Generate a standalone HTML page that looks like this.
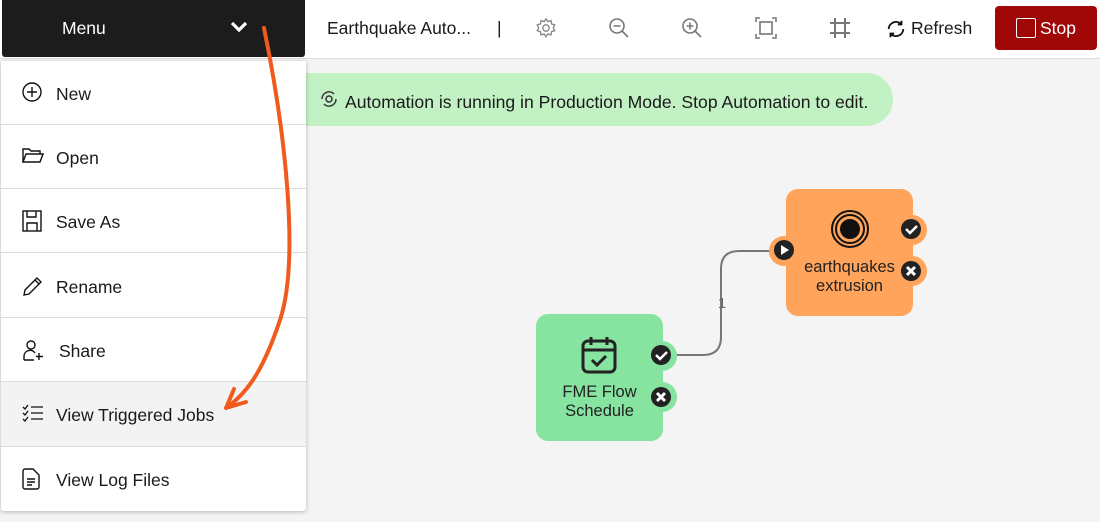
<!DOCTYPE html>
<html><head><meta charset="utf-8"><style>
*{margin:0;padding:0;box-sizing:border-box}
body{width:1100px;height:522px;overflow:hidden;background:#f4f4f4;font-family:"Liberation Sans",sans-serif;color:#1a1a1a;position:relative}
.hdr{position:absolute;left:0;top:0;width:1100px;height:59px;background:#fff;border-bottom:1px solid #ddd}
.menu{position:absolute;left:2px;top:0;width:303px;height:57px;background:#1c1c1c;border-radius:0 0 3px 3px;color:#fff;font-size:17.5px}
.menu span{position:absolute;left:60px;top:18px}
.t{position:absolute;font-size:17.5px;top:18px}
.stop{position:absolute;left:995px;top:6px;width:102px;height:44px;background:#a00808;border-radius:4px;color:#fff;font-size:17.5px}
.drop{position:absolute;left:1px;top:61px;width:305px;height:450px;background:#fff;box-shadow:0 1px 4px rgba(0,0,0,.25);border-radius:0 0 3px 3px}
.row{position:absolute;left:0;width:305px;height:64px;border-bottom:1px solid #ddd;font-size:17.5px}
.row span{position:absolute;left:55px;top:23px}
.row svg{position:absolute;left:21px;top:21px}
.banner{position:absolute;left:300px;top:73px;width:593px;height:53px;background:#c2f2c4;border-radius:0 27px 27px 0;font-size:17.6px}
.node{position:absolute;width:127px;height:127px;border-radius:12px;text-align:center;font-size:16.5px;line-height:19px;color:#222}
.port{position:absolute;width:30px;height:30px;border-radius:50%}
</style></head><body>
<div class="hdr"></div>
<div class="menu"><span>Menu</span>
<svg style="position:absolute;left:227px;top:20px" width="20" height="14" viewBox="0 0 20 14"><path d="M3 3l7 7 7-7" stroke="#fff" stroke-width="3.2" fill="none"/></svg></div>
<div class="t" style="left:327px">Earthquake Auto...</div>
<div class="t" style="left:497px">|</div>
<svg style="position:absolute;left:535px;top:17px" width="22" height="22" viewBox="0 0 24 24" fill="none" stroke="#888" stroke-width="1.5"><circle cx="12" cy="12" r="3.5"/><path d="M12 2l2 3 3.5-1 .5 3.5 3.5 1-1.5 3.5 1.5 3-3.5 1-.5 3.5-3.5-1-2 3-2-3-3.5 1-.5-3.5-3.5-1 1.5-3-1.5-3.5 3.5-1 .5-3.5 3.5 1z"/></svg>
<svg style="position:absolute;left:608px;top:17px" width="22" height="22" viewBox="0 0 22 22" fill="none" stroke="#777" stroke-width="1.6"><circle cx="9" cy="9" r="7"/><path d="M5.5 9h7M14 14l6 6"/></svg>
<svg style="position:absolute;left:681px;top:17px" width="22" height="22" viewBox="0 0 22 22" fill="none" stroke="#777" stroke-width="1.6"><circle cx="9" cy="9" r="7"/><path d="M5.5 9h7M9 5.5v7M14 14l6 6"/></svg>
<svg style="position:absolute;left:755px;top:17px" width="22" height="22" viewBox="0 0 22 22" fill="none" stroke="#777" stroke-width="1.6"><path d="M1 5V1h4M17 1h4v4M21 17v4h-4M5 21H1v-4"/><rect x="5" y="5" width="12" height="12"/></svg>
<svg style="position:absolute;left:829px;top:17px" width="22" height="22" viewBox="0 0 22 22" fill="none" stroke="#777" stroke-width="2"><path d="M6 1v20M16 1v20M1 6h20M1 16h20"/></svg>
<svg style="position:absolute;left:885px;top:18px" width="22" height="22" viewBox="0 0 24 24" fill="none" stroke="#111" stroke-width="2"><path d="M20 12a8 8 0 0 1-14 5M4 12a8 8 0 0 1 14-5"/><path d="M18 3v4h-4M6 21v-4h4"/></svg>
<div class="t" style="left:911px">Refresh</div>
<div class="stop"><div style="position:absolute;left:21px;top:12px;width:20px;height:20px;border:1.5px solid #fff;border-radius:2px"></div><span style="position:absolute;left:45px;top:12px">Stop</span></div>

<div class="banner">
<svg style="position:absolute;left:19px;top:16px" width="20" height="20" viewBox="0 0 20 20" fill="none" stroke="#333" stroke-width="1.5"><circle cx="10" cy="10" r="3"/><path d="M17 10a7 7 0 0 1-12 5M3 10a7 7 0 0 1 12-5"/></svg>
<span style="position:absolute;left:45px;top:19px">Automation is running in Production Mode. Stop Automation to edit.</span></div>

<div class="drop">
<div class="row" style="top:0"><svg width="20" height="20" viewBox="0 0 20 20" fill="none" stroke="#111" stroke-width="1.4"><circle cx="10" cy="10" r="9"/><path d="M10 5v10M5 10h10"/></svg><span>New</span></div>
<div class="row" style="top:64px"><svg width="22" height="20" viewBox="0 0 22 20" fill="none" stroke="#111" stroke-width="1.4"><path d="M1 16V3h6l2 2h9v3M1 16l3-8h17l-3 8z"/></svg><span>Open</span></div>
<div class="row" style="top:128px"><svg width="20" height="22" viewBox="0 0 20 22" fill="none" stroke="#111" stroke-width="1.4"><rect x="1" y="1" width="18" height="20"/><path d="M5 1v6h9V1M5 21v-8h10v8"/></svg><span>Save As</span></div>
<div class="row" style="top:193px"><svg width="22" height="22" viewBox="0 0 22 22" fill="none" stroke="#111" stroke-width="1.4"><path d="M2 20l1-5L15 3l4 4L7 19zM13 5l4 4"/></svg><span>Rename</span></div>
<div class="row" style="top:257px"><svg width="24" height="22" viewBox="0 0 24 22" fill="none" stroke="#111" stroke-width="1.4"><circle cx="9" cy="6" r="4"/><path d="M2 21v-4a6 6 0 0 1 11-3M2 21h10M17 14v7M14 17.5h7"/></svg><span style="left:58px">Share</span></div>
<div class="row" style="top:321px;background:#f3f3f3;height:65px"><svg width="22" height="20" viewBox="0 0 22 20" fill="none" stroke="#111" stroke-width="1.3"><path d="M1 4l2 2 3-4M1 10l2 2 3-4M1 16l2 2 3-4M9 4h12M9 10h12M9 16h12"/></svg><span>View Triggered Jobs</span></div>
<div class="row" style="top:386px;border:none"><svg width="18" height="22" viewBox="0 0 18 22" fill="none" stroke="#111" stroke-width="1.4"><path d="M1 3a2 2 0 0 1 2-2h8l6 6v12a2 2 0 0 1-2 2H3a2 2 0 0 1-2-2z"/><path d="M5 11h8M5 14h8M5 17h5"/></svg><span>View Log Files</span></div>
</div>

<svg style="position:absolute;left:0;top:0" width="1100" height="522">
<path d="M663 355h40q18 0 18-18v-68q0-18 18-18h45" stroke="#777" stroke-width="2" fill="none"/>
<text x="722" y="308" font-family="Liberation Sans" font-size="15" fill="#666" text-anchor="middle">1</text>
<path d="M264 28C285 130 300 260 280 320C265 365 250 390 230 405" stroke="#f05a1c" stroke-width="4" fill="none" stroke-linecap="round"/>
<path d="M226 408L246 402M226 408L234 389" stroke="#f05a1c" stroke-width="4" fill="none" stroke-linecap="round"/>
</svg>

<div class="node" style="left:536px;top:314px;background:#86e3a0">
<svg style="position:absolute;left:44px;top:21px" width="38" height="40" viewBox="0 0 38 40" fill="none" stroke="#222" stroke-width="3"><rect x="3" y="6" width="32" height="31" rx="5"/><path d="M3 15h32M11 2v8M27 2v8M12 25l5 5 9-9"/></svg>
<div style="position:absolute;left:0;width:127px;top:69px">FME Flow<br>Schedule</div>
<div class="port" style="left:111px;top:27px;background:#86e3a0"></div>
<div class="port" style="left:111px;top:68px;background:#86e3a0"></div>
</div>
<svg style="position:absolute;left:650px;top:344px" width="24" height="66" viewBox="0 0 24 66"><circle cx="11" cy="11" r="10" fill="#222"/><path d="M6 11l4 4 7-7" stroke="#fff" stroke-width="2.5" fill="none"/><circle cx="11" cy="53" r="10" fill="#222"/><path d="M7 49l8 8M15 49l-8 8" stroke="#fff" stroke-width="3"/></svg>

<div class="node" style="left:786px;top:189px;background:#ffa45a">
<svg style="position:absolute;left:44px;top:20px" width="40" height="40" viewBox="0 0 40 40" fill="none" stroke="#111" stroke-width="2"><circle cx="20" cy="20" r="18"/><circle cx="20" cy="20" r="14"/><circle cx="20" cy="20" r="9" fill="#111"/></svg>
<div style="position:absolute;left:0;width:127px;top:69px">earthquakes<br>extrusion</div>
<div class="port" style="left:111px;top:26px;background:#ffa45a"></div>
<div class="port" style="left:111px;top:67px;background:#ffa45a"></div>
<div class="port" style="left:-17px;top:47px;background:#ffa45a"></div>
</div>
<svg style="position:absolute;left:773px;top:217px" width="150" height="66" viewBox="0 0 150 66"><circle cx="11" cy="33" r="10" fill="#222"/><path d="M8 28v10l8-5z" fill="#fff"/><circle cx="138" cy="12" r="10" fill="#222"/><path d="M133 12l4 4 7-7" stroke="#fff" stroke-width="2.5" fill="none"/><circle cx="138" cy="54" r="10" fill="#222"/><path d="M134 50l8 8M142 50l-8 8" stroke="#fff" stroke-width="3"/></svg>
</body></html>
